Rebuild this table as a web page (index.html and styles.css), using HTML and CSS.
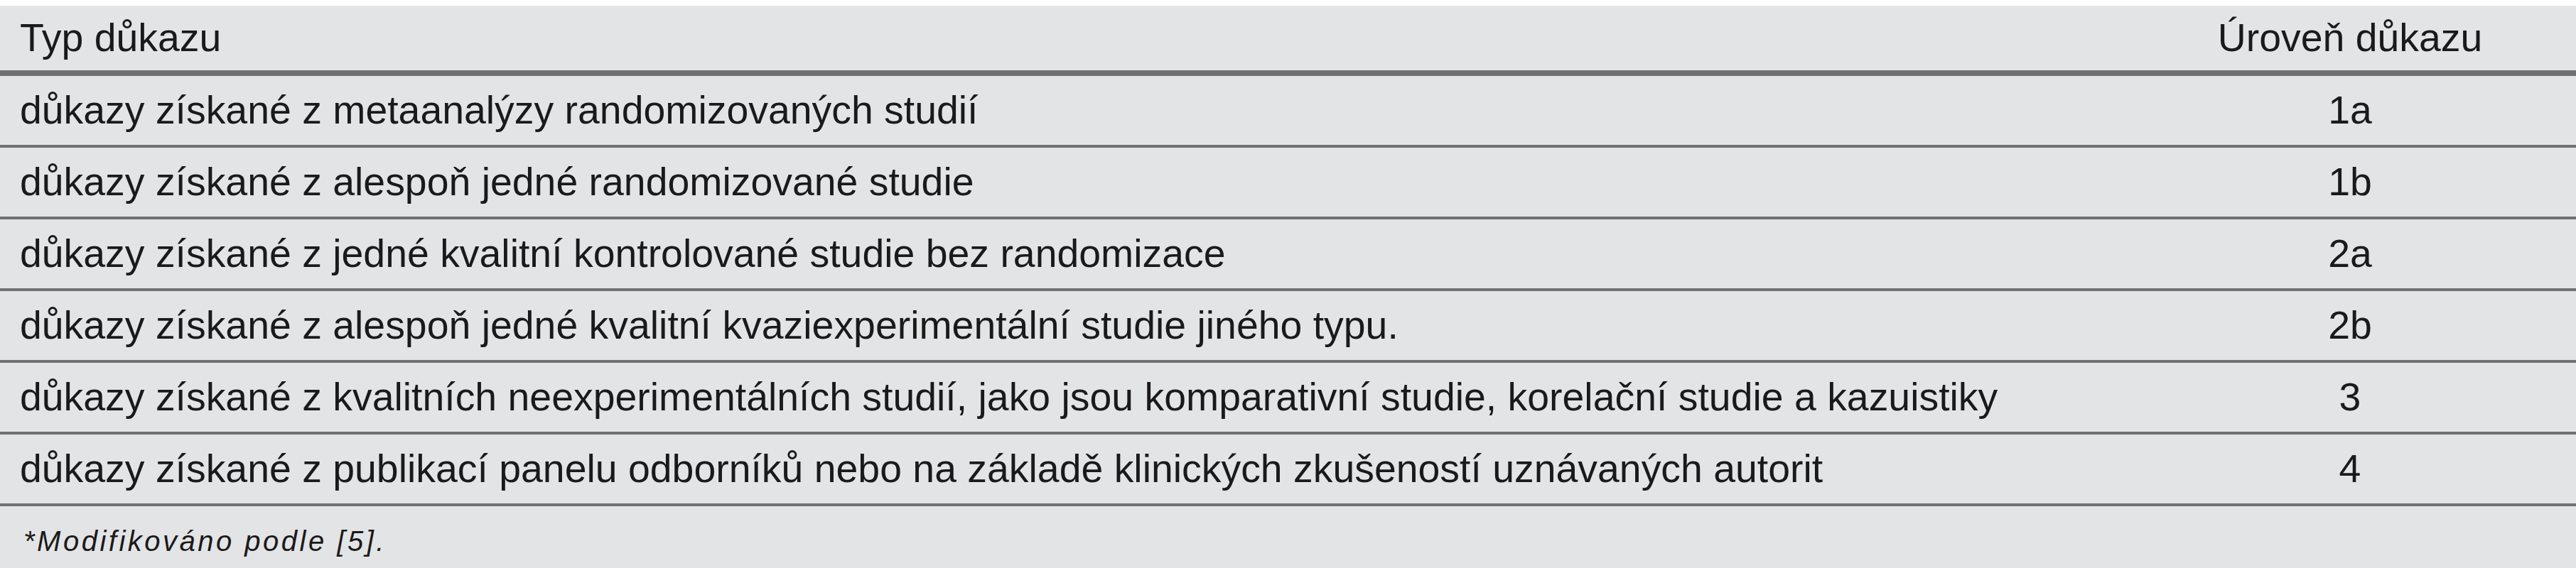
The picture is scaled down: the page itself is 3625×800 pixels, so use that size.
FILE: index.html
```html
<!DOCTYPE html>
<html lang="cs">
<head>
<meta charset="utf-8">
<title>Úroveň důkazu</title>
<link rel="stylesheet" href="styles.css">
</head>
<body>
<div class="sheet">
  <div class="row head">
    <div class="c-type">Typ důkazu</div>
    <div class="c-level">Úroveň důkazu</div>
  </div>
  <div class="row">
    <div class="c-type">důkazy získané z metaanalýzy randomizovaných studií</div>
    <div class="c-level">1a</div>
  </div>
  <div class="row">
    <div class="c-type">důkazy získané z alespoň jedné randomizované studie</div>
    <div class="c-level">1b</div>
  </div>
  <div class="row">
    <div class="c-type">důkazy získané z jedné kvalitní kontrolované studie bez randomizace</div>
    <div class="c-level">2a</div>
  </div>
  <div class="row">
    <div class="c-type">důkazy získané z alespoň jedné kvalitní kvaziexperimentální studie jiného typu.</div>
    <div class="c-level">2b</div>
  </div>
  <div class="row">
    <div class="c-type">důkazy získané z kvalitních neexperimentálních studií, jako jsou komparativní studie, korelační studie a kazuistiky</div>
    <div class="c-level">3</div>
  </div>
  <div class="row">
    <div class="c-type">důkazy získané z publikací panelu odborníků nebo na základě klinických zkušeností uznávaných autorit</div>
    <div class="c-level">4</div>
  </div>
  <div class="foot">*Modifikováno podle [5].</div>
</div>
</body>
</html>
```

FILE: styles.css
```css
html, body {
  margin: 0;
  padding: 0;
  background: #ffffff;
}

body {
  padding-top: 8px;
  font-family: "Liberation Sans", Arial, sans-serif;
  color: #1a1a1a;
}

.sheet {
  background: #e3e4e6;
  height: 792px;
  display: flex;
  flex-direction: column;
}

.row {
  display: grid;
  grid-template-columns: 1fr 636px;
  align-items: center;
  height: 97px;
  border-bottom: 4px solid #707173;
  font-size: 55.4px;
  line-height: 63px;
}

.row.head {
  height: 91px;
  border-bottom: 8px solid #707173;
}

.c-type {
  padding-left: 28px;
  white-space: nowrap;
}

.c-level {
  text-align: center;
  white-space: nowrap;
}

.foot {
  flex: 1;
  padding: 26px 0 0 33px;
  font-size: 40px;
  line-height: 46px;
  font-style: italic;
  letter-spacing: 3.5px;
}
```
